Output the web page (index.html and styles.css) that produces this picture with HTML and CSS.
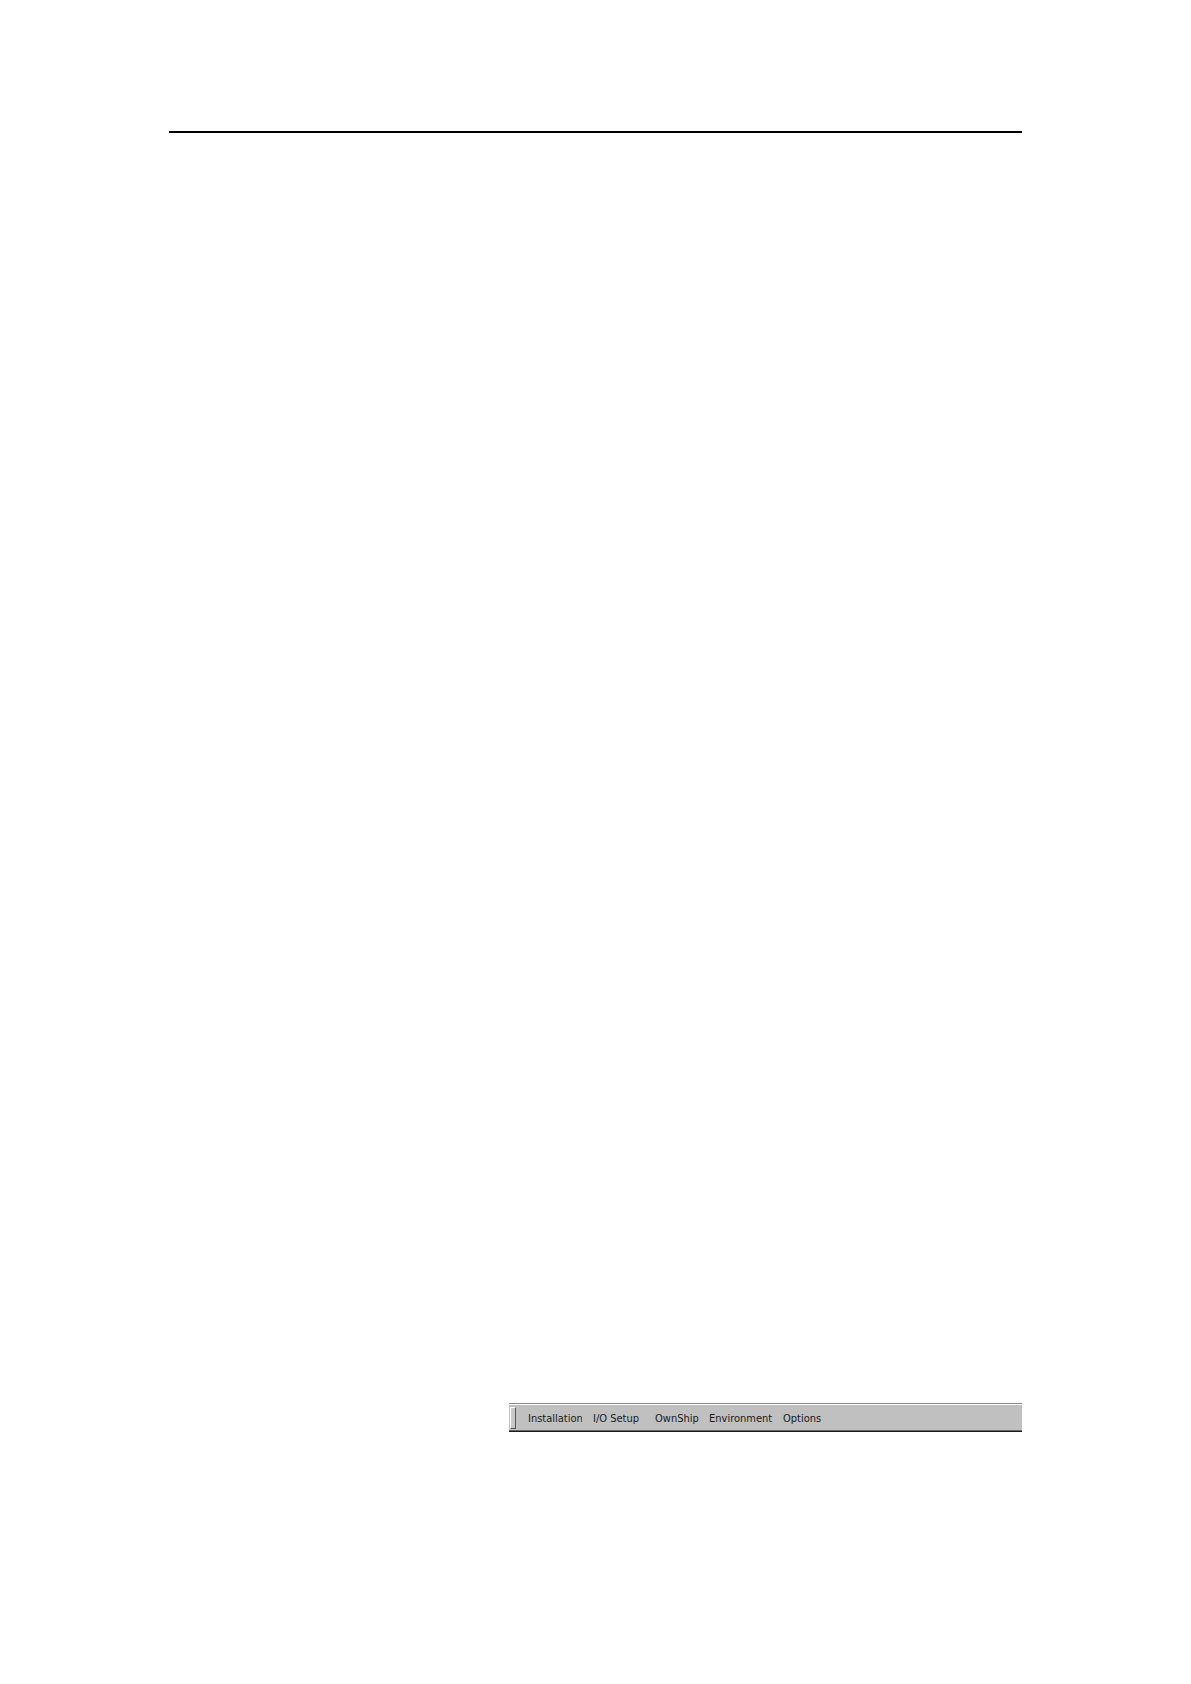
FILE: index.html
```html
<!DOCTYPE html>
<html>
<head>
<meta charset="utf-8">
<link rel="stylesheet" href="styles.css">
</head>
<body>
<div class="page">
  <div class="rule"></div>
  <div class="menubar">
    <div class="grip"></div>
    <div class="items">
      <span class="item m1">Installation</span>
      <span class="item m2">I/O Setup</span>
      <span class="item m3">OwnShip</span>
      <span class="item m4">Environment</span>
      <span class="item m5">Options</span>
    </div>
  </div>
</div>
</body>
</html>
```
FILE: styles.css
```css
html, body {
  margin: 0;
  padding: 0;
  background: #fff;
}
.page {
  width: 1191px;
  height: 1684px;
  display: flex;
  flex-direction: column;
}
.rule {
  margin: 131px 0 0 169px;
  width: 853px;
  height: 2px;
  background: #000;
}
.menubar {
  margin: 1270px 0 0 509px;
  width: 513px;
  height: 29px;
  box-sizing: border-box;
  background: #c0c0c0;
  border-top: 1px solid #8a8a8a;
  box-shadow: inset 0 1px 0 #fff, inset 0 -1px 0 #6a6a6a;
  border-bottom: 1px solid #1a1a1a;
  display: flex;
  align-items: stretch;
}
.grip {
  width: 4px;
  margin: 3px 0 2px 1px;
  border-left: 1px solid #fff;
  border-top: 1px solid #fff;
  border-right: 1px solid #555;
  border-bottom: 1px solid #555;
  background: #c8c8c8;
}
.items {
  display: flex;
  align-items: center;
  margin-left: 12px;
  padding-top: 2px;
  font-family: "DejaVu Sans Condensed", "DejaVu Sans", sans-serif;
  font-size: 11px;
  color: #1a1a1a;
}
.item {
  white-space: nowrap;
  overflow: hidden;
}
.m1 { width: 54px; margin-right: 11px; }
.m2 { width: 62px; }
.m3 { width: 54px; }
.m4 { width: 74px; }
.m5 { width: 60px; }
```
